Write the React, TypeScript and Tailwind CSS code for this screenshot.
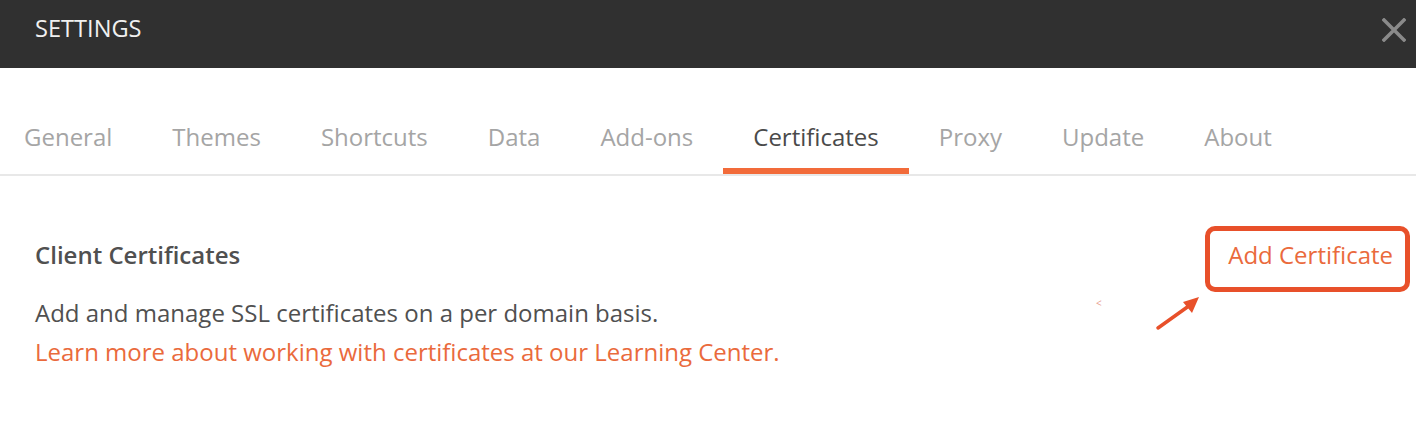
import React from "react";

const tabs = ["General", "Themes", "Shortcuts", "Data", "Add-ons", "Certificates", "Proxy", "Update", "About"];

export default function App() {
  return (
    <div className="relative w-[1416px] h-[432px] bg-white overflow-hidden" style={{ fontFamily: '"Open Sans", sans-serif' }}>
      <div className="h-[68px] bg-[#303030] flex items-center justify-between pl-[35px] pr-[10px] pb-[10px]">
        <div className="text-[23.6px] text-[#f0f0f0] leading-none">SETTINGS</div>
        <svg width="24" height="24" viewBox="0 0 24 24" className="mt-[2px]">
          <path d="M2 2 L22 22 M22 2 L2 22" stroke="#8a8a8a" strokeWidth="3.5" strokeLinecap="square" />
        </svg>
      </div>
      <div className="border-b-2 border-[#e8e8e8] pt-[52px]">
        <div className="flex -ml-[6px]">
          {tabs.map((t) => {
            const active = t === "Certificates";
            return (
              <div key={t} className="flex flex-col items-stretch">
                <div className={`px-[30px] text-[24px] leading-[33px] ${active ? "text-[#4a4a4a]" : "text-[#a5a5a5]"}`}>{t}</div>
                <div className={`mt-[15px] h-[6px] ${active ? "bg-[#f26b3a]" : ""}`} />
              </div>
            );
          })}
        </div>
      </div>
      <div className="pl-[35px] pr-[23px] pt-[64px]">
        <div className="flex items-center justify-between">
          <div className="text-[24px] leading-[30px] font-semibold text-[#505050]">Client Certificates</div>
          <div className="text-[24px] leading-[30px] text-[#ea6a3c]">Add Certificate</div>
        </div>
        <div className="mt-[23px] text-[24px] leading-[39px]">
          <div className="text-[#505050]">Add and manage SSL certificates on a per domain basis.</div>
          <div className="text-[#ea6a3c]">Learn more about working with certificates at our Learning Center.</div>
        </div>
      </div>
      <div className="absolute left-[1205px] top-[226px] w-[205px] h-[66px] border-[5px] border-[#e8502a] rounded-[10px]" />
      <div className="absolute left-[1096px] top-[298px] text-[10px] leading-none text-[#e8a090]">&lt;</div>
      <svg className="absolute left-[1150px] top-[290px]" width="56" height="46" viewBox="0 0 56 46">
        <path d="M8 38 L43 13" stroke="#e8502a" strokeWidth="3.5" strokeLinecap="round" />
        <path d="M49 7 L33 12 L42 23 Z" fill="#e8502a" />
      </svg>
    </div>
  );
}
